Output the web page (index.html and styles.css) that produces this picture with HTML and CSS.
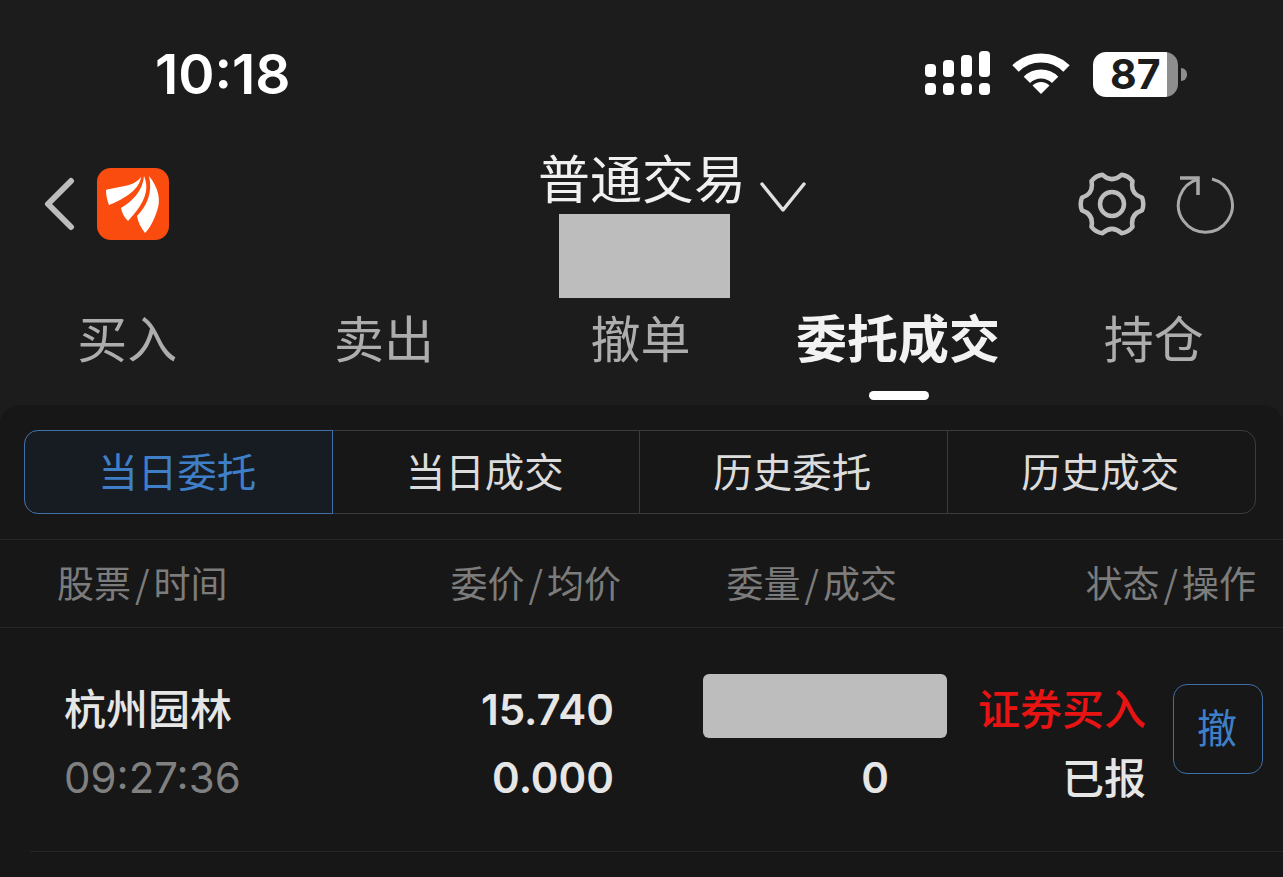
FILE: index.html
```html
<!DOCTYPE html>
<html lang="zh-CN">
<head>
  <meta charset="UTF-8">
  <meta name="viewport" content="width=device-width, initial-scale=1.0">
  <title>普通交易</title>
  <link rel="stylesheet" href="styles.css">
</head>
<body>
  <!-- 状态栏 -->
  <div class="status-bar">
    <span class="clock">10:18</span>
    <div class="status-icons">
      <svg class="signal" width="66" height="46" viewBox="0 0 66 46" fill="#fff">
        <rect x="0" y="13" width="11" height="13" rx="4"/>
        <rect x="18" y="9" width="11" height="17" rx="4"/>
        <rect x="36" y="4" width="11" height="22" rx="4"/>
        <rect x="54" y="0" width="11" height="26" rx="4"/>
        <rect x="0" y="32" width="11" height="12" rx="4"/>
        <rect x="18" y="32" width="11" height="12" rx="4"/>
        <rect x="36" y="32" width="11" height="12" rx="4"/>
        <rect x="54" y="32" width="11" height="12" rx="4"/>
      </svg>
      <svg class="wifi" width="58" height="42" viewBox="0 0 58 42" fill="none" stroke="#fff" stroke-width="9">
        <path d="M3.500 15.500A36 36 0 0 1 54.500 15.500"/>
        <path d="M14.900 26.900A20 20 0 0 1 43.100 26.900"/>
        <path d="M20.500 32.500L29 41L37.500 32.500A12 12 0 0 0 20.500 32.500Z" fill="#fff" stroke="none"/>
      </svg>
      <div class="battery">
        <div class="battery-body">87</div>
        <div class="battery-tip"></div>
      </div>
    </div>
  </div>

  <!-- 顶部导航 -->
  <div class="nav">
    <div class="nav-left">
      <svg width="32" height="54" viewBox="0 0 32 54" fill="none" stroke="#bdbdbd" stroke-width="6" stroke-linecap="round" stroke-linejoin="round">
        <path d="M27 4L4 27L27 50"/>
      </svg>
      <svg class="logo" width="72" height="72" viewBox="0 0 72 72">
        <rect width="72" height="72" rx="14" fill="#fb4c10"/>
        <path d="M9 22C22 18 37 19 44 9C43 20 30 30 12 37C10 32 9 27 9 22Z" fill="#fff"/>
        <path d="M47 8C52 20 50 33 31 53C27 49 25 45 24 40C36 33 46 22 47 8Z" fill="#fff"/>
        <path d="M52 8C62 20 64 33 60 43C57 52 53 60 48 65C44 60 41 54 40 48C50 38 56 24 52 8Z" fill="#fff"/>
      </svg>
    </div>
    <div class="nav-center">
      <div class="nav-title">
        <span>普通交易</span>
        <svg width="46" height="32" viewBox="0 0 46 32" fill="none" stroke="#e0e0e0" stroke-width="3.500" stroke-linecap="round" stroke-linejoin="round">
          <path d="M2 3L23 29L44 3"/>
        </svg>
      </div>
      <div class="mask mask-account"></div>
    </div>
    <div class="nav-right">
      <svg width="70" height="70" viewBox="-36.500 -36.500 73 73" fill="none" stroke="#bdbdbd" stroke-width="4.700" stroke-linejoin="round">
        <path d="M31.300 -6.650Q34 0 31.300 6.650Q18.700 10.800 21.410 23.780Q17 29.440 9.890 30.430Q0 21.600 -9.890 30.430Q-17 29.440 -21.410 23.780Q-18.700 10.800 -31.300 6.650Q-34 0 -31.300 -6.650Q-18.700 -10.800 -21.410 -23.780Q-17 -29.440 -9.890 -30.430Q0 -21.600 9.890 -30.430Q17 -29.440 21.410 -23.780Q18.700 -10.800 31.300 -6.650Z"/>
        <circle r="12.500"/>
      </svg>
      <svg width="60" height="60" viewBox="0 0 60 60" fill="none" stroke="#a8a8a8" stroke-width="3">
        <path d="M36 5A27 27 0 1 1 22 5.200"/>
        <path d="M4 4H22V21" stroke-width="3.500"/>
      </svg>
    </div>
  </div>

  <!-- 标签 -->
  <div class="tabs">
    <div class="tab">买入</div>
    <div class="tab">卖出</div>
    <div class="tab">撤单</div>
    <div class="tab tab-on">委托成交</div>
    <div class="tab">持仓</div>
  </div>

  <div class="panel">
    <div class="seg">
      <div class="seg-item seg-on">当日委托</div>
      <div class="seg-item">当日成交</div>
      <div class="seg-item">历史委托</div>
      <div class="seg-item">历史成交</div>
    </div>

    <div class="list-head">
      <span>股票<i class="sl">/</i>时间</span>
      <span>委价<i class="sl">/</i>均价</span>
      <span>委量<i class="sl">/</i>成交</span>
      <span>状态<i class="sl">/</i>操作</span>
    </div>

    <div class="order">
      <div class="col col-name">
        <div class="name">杭州园林</div>
        <div class="time">09:27:36</div>
      </div>
      <div class="col col-price">
        <div>15.740</div>
        <div>0.000</div>
      </div>
      <div class="col col-qty">
        <div class="mask mask-qty"></div>
        <div class="qty-done">0</div>
      </div>
      <div class="col col-state">
        <div class="side-buy">证券买入</div>
        <div class="state">已报</div>
      </div>
      <button class="cancel-btn">撤</button>
    </div>
  </div>
</body>
</html>
```

FILE: styles.css
```css
/* 基础 */
* {
  margin: 0;
  padding: 0;
  box-sizing: border-box;
}

body {
  height: 100vh;
  overflow: hidden;
  display: flex;
  flex-direction: column;
  background-color: #1c1c1c;
  color: #e6e6e6;
  font-family: "Noto Sans CJK SC", "Noto Sans", sans-serif;
}

svg {
  display: block;
}

.mask {
  background-color: #bdbdbd;
}

/* 状态栏 */
.status-bar {
  height: 148px;
  flex-shrink: 0;
  display: flex;
  justify-content: space-between;
  align-items: center;
  padding: 0 96px 0 155px;
}

.clock {
  font-family: Inter, sans-serif;
  font-size: 55px;
  font-weight: 600;
  color: #fff;
}

.status-icons {
  display: flex;
  align-items: center;
}

.signal {
  margin-right: 21px;
}

.wifi {
  margin-right: 23px;
}

.battery {
  display: flex;
  align-items: center;
  gap: 3px;
}

.battery-body {
  width: 85px;
  height: 45px;
  border-radius: 13px;
  background: linear-gradient(90deg, #fff 87%, #8e8e8e 87%);
  color: #1c1c1c;
  font-family: Inter, sans-serif;
  font-size: 41px;
  font-weight: 700;
  line-height: 45px;
  padding-left: 17px;
}

.battery-tip {
  width: 6px;
  height: 13px;
  border-radius: 0 6px 6px 0;
  background-color: #8e8e8e;
}

/* 导航 */
.nav {
  flex-shrink: 0;
  display: grid;
  grid-template-columns: 540px 1fr auto;
  padding-top: 2px;
}

.nav-left {
  display: flex;
  align-items: center;
  gap: 21px;
  height: 72px;
  margin-top: 18px;
  padding-left: 44px;
}

.nav-title {
  display: flex;
  align-items: center;
  gap: 14px;
  height: 60px;
  font-size: 52px;
  color: #f0f0f0;
}

.nav-title span {
  margin: 0 0 8px -2px;
}

.nav-title svg {
  margin-top: 34px;
}

.mask-account {
  width: 171px;
  height: 84px;
  margin: 4px 0 0 19px;
}

.nav-right {
  display: flex;
  align-items: center;
  gap: 29px;
  height: 70px;
  margin-top: 19px;
  padding-right: 47px;
}

/* 标签 */
.tabs {
  flex-shrink: 0;
  display: grid;
  grid-template-columns: repeat(5, 1fr);
  margin-bottom: 5px;
}

.tab {
  height: 102px;
  padding: 4px 2px 0 0;
  text-align: center;
  font-size: 50px;
  line-height: 68px;
  color: #adadad;
}

.tab-on {
  position: relative;
  padding-right: 0;
  font-size: 51px;
  font-weight: 700;
  color: #f2f2f2;
}

.tab-on::after {
  content: "";
  position: absolute;
  left: 50%;
  bottom: 0;
  width: 60px;
  height: 9px;
  margin-left: -29px;
  border-radius: 5px;
  background-color: #fff;
}

/* 内容面板 */
.panel {
  flex: 1;
  padding-top: 25px;
  border-radius: 20px 20px 0 0;
  background-color: #171717;
}

.seg {
  display: grid;
  grid-template-columns: repeat(4, 1fr);
  width: 1232px;
  height: 84px;
  margin-left: 24px;
  border: 1px solid #3c3c3c;
  border-radius: 14px;
}

.seg-item {
  display: flex;
  justify-content: center;
  align-items: center;
  padding: 0 2px 6px 0;
  border-right: 1px solid #3c3c3c;
  font-size: 39.500px;
  color: #dcdcdc;
}

.seg-item:last-child {
  border-right: none;
}

.seg-on {
  margin: -1px 0 -1px -1px;
  border: 1px solid #3f6ea8;
  border-radius: 14px 0 0 14px;
  background-color: #171c22;
  color: #3f7fc8;
}

.list-head {
  display: grid;
  grid-template-columns: 292px 272px 276px 359px;
  height: 89px;
  margin-top: 25px;
  padding-left: 57px;
  border-top: 1px solid #262626;
  border-bottom: 1px solid #262626;
  font-size: 37px;
  line-height: 84px;
  color: #7c7c7c;
}

.list-head span {
  text-align: right;
}

.list-head span:first-child {
  text-align: left;
}

.sl {
  margin: 0 4px;
  font-style: normal;
}

/* 委托行 */
.order {
  display: flex;
  align-items: flex-start;
  height: 224px;
  margin-left: 30px;
  padding: 48px 0 0 34px;
  border-bottom: 1px solid #262626;
  font-family: Inter, "Noto Sans CJK SC", sans-serif;
  font-size: 42px;
  font-weight: 600;
  line-height: 68px;
  color: #e6e6e6;
}

.col-name {
  width: 336px;
}

.name {
  margin: -3px 0 3px;
  font-family: "Noto Sans CJK SC", sans-serif;
  font-weight: 500;
}

.time {
  font-weight: 400;
  color: #808080;
}

.col-price {
  width: 214px;
  text-align: right;
}

.col-qty {
  width: 244px;
  margin-left: 89px;
}

.mask-qty {
  height: 64px;
  margin: -2px 0 6px;
  border-radius: 6px;
}

.qty-done {
  padding-right: 58px;
  text-align: right;
}

.col-state {
  width: 199px;
  text-align: right;
  font-family: "Noto Sans CJK SC", sans-serif;
  font-weight: 500;
}

.side-buy {
  margin: -3px 0 3px;
  color: #e81414;
}

.state {
  margin: -2px 0 2px;
}

.cancel-btn {
  width: 90px;
  height: 90px;
  margin: 8px 0 0 27px;
  padding: 0 2px 6px 0;
  border: 1.5px solid #3f6ea8;
  border-radius: 14px;
  background: none;
  color: #3f7fc8;
  font-family: "Noto Sans CJK SC", sans-serif;
  font-size: 40px;
}
```
